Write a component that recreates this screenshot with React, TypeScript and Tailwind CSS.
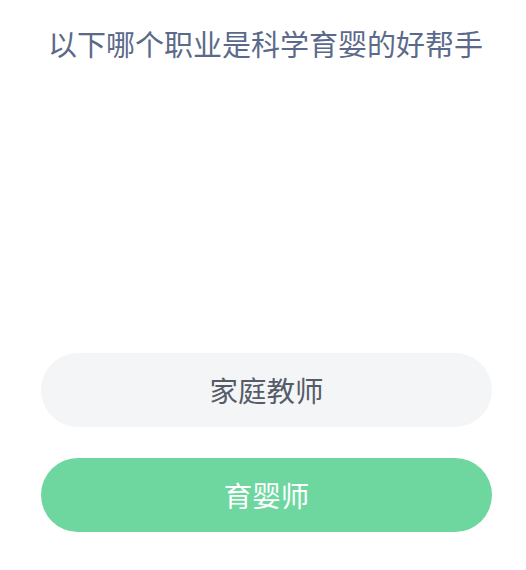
import React from 'react'

const options = [
  { label: '家庭教师', correct: false },
  { label: '育婴师', correct: true },
]

const App = () => {
  return (
    <div className="w-[526px] h-[570px] bg-white overflow-hidden font-['Noto_Sans_CJK_SC','Noto_Sans',sans-serif]">
      {/* Question */}
      <div className="pt-[22px] pl-[5px] text-center text-[29px] leading-[42px] text-[#5b6a8a]">
        以下哪个职业是科学育婴的好帮手
      </div>

      {/* Answers */}
      <div className="mt-[289px] ml-[41px] w-[451px] flex flex-col gap-[31px]">
        {options.map(opt => (
          <button
            key={opt.label}
            className={
              opt.correct
                ? 'h-[74px] rounded-full bg-[#6dd79f] text-white text-[28.5px]'
                : 'h-[74px] rounded-full bg-[#f4f5f7] text-[#545c69] text-[28.5px]'
            }
          >
            {opt.label}
          </button>
        ))}
      </div>
    </div>
  )
}

export default App
